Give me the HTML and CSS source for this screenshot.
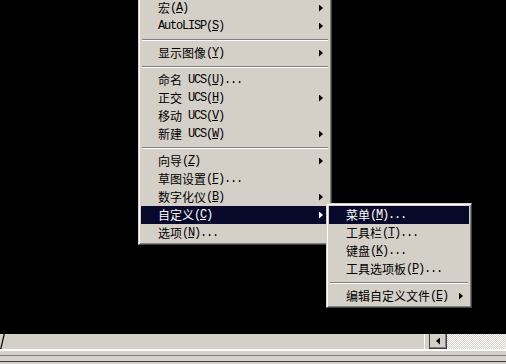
FILE: index.html
```html
<!DOCTYPE html>
<html lang="zh-CN">
<head>
    <meta charset="UTF-8">
    <title>工具菜单</title>
    <link rel="stylesheet" href="styles.css">
</head>
<body>
    <div class="drawing"></div>

    <div class="hscroll">
        <div class="track">
            <svg class="grip" width="6" height="17" viewBox="0 0 6 17"><line x1="4.5" y1="0" x2="0.5" y2="17" stroke="#000" stroke-width="1.2"/></svg>
        </div>
        <div class="thumb"></div>
        <div class="scroll-btn"><span class="left-arrow"></span></div>
        <div class="pattern"></div>
    </div>
    <div class="strip"></div>

    <ul class="menu main">
        <li class="item sub-arrow">宏<span class="en">(<u>A</u>)</span></li>
        <li class="item sub-arrow"><span class="en">AutoLISP(<u>S</u>)</span></li>
        <li class="sep"></li>
        <li class="item sub-arrow">显示图像<span class="en">(<u>Y</u>)</span></li>
        <li class="sep"></li>
        <li class="item">命名<span class="en"> UCS(<u>U</u>)...</span></li>
        <li class="item sub-arrow">正交<span class="en"> UCS(<u>H</u>)</span></li>
        <li class="item">移动<span class="en"> UCS(<u>V</u>)</span></li>
        <li class="item sub-arrow">新建<span class="en"> UCS(<u>W</u>)</span></li>
        <li class="sep"></li>
        <li class="item sub-arrow">向导<span class="en">(<u>Z</u>)</span></li>
        <li class="item">草图设置<span class="en">(<u>F</u>)...</span></li>
        <li class="item sub-arrow">数字化仪<span class="en">(<u>B</u>)</span></li>
        <li class="item sub-arrow active">自定义<span class="en">(<u>C</u>)</span></li>
        <li class="item">选项<span class="en">(<u>N</u>)...</span></li>
    </ul>

    <ul class="menu submenu">
        <li class="item active">菜单<span class="en">(<u>M</u>)...</span></li>
        <li class="item">工具栏<span class="en">(<u>T</u>)...</span></li>
        <li class="item">键盘<span class="en">(<u>K</u>)...</span></li>
        <li class="item">工具选项板<span class="en">(<u>P</u>)...</span></li>
        <li class="sep"></li>
        <li class="item sub-arrow">编辑自定义文件<span class="en">(<u>E</u>)</span></li>
    </ul>
</body>
</html>
```

FILE: styles.css
```css
body { margin: 0; width: 506px; height: 364px; overflow: hidden; background: #000; display: flex; flex-direction: column; position: relative; font-family: "Noto Sans CJK SC", sans-serif; font-size: 12px; }
.drawing { flex: 1; }

/* bottom scroll bar */
.hscroll { height: 15px; display: flex; }
.track { flex: 1; background: #d4d0c8; }
.grip { display: block; margin-top: -1px; }
.thumb { width: 6px; box-sizing: border-box; background: #d4d0c8; border-left: 1px solid #fff; border-right: 1px solid #404040; }
.scroll-btn { width: 17px; box-sizing: border-box; background: #d4d0c8; border-right: 1px solid #404040; border-bottom: 1px solid #404040; box-shadow: inset -1px -1px #808080; display: flex; align-items: center; justify-content: center; }
.left-arrow { width: 4px; height: 7px; background: #000; clip-path: polygon(100% 0, 100% 100%, 0 50%); }
.pattern { width: 59px; background-image: conic-gradient(#fff 25%, #d4d0c8 0 50%, #fff 0 75%, #d4d0c8 0); background-size: 2px 2px; }
.strip { height: 15px; background: linear-gradient(#fff 0 2px, #d4d0c8 2px 6px, #808080 6px 7px, #d4d0c8 7px 12px, #404040 12px 13px, #d4d0c8 13px); }

/* menus */
.menu { position: absolute; margin: 0; padding: 2px; list-style: none; box-sizing: border-box; background: #d4d0c8; border: 1px solid; border-color: #d4d0c8 #404040 #404040 #d4d0c8; box-shadow: inset 1px 1px #fff, inset -1px -1px #808080; }
.main { left: 138px; top: -4px; width: 194px; }
.submenu { left: 326px; top: 203px; width: 146px; }
.item { height: 18px; display: flex; align-items: center; padding: 0 6px 0 17px; color: #000; white-space: pre; line-height: 18px; }
.item .en { font-family: "Liberation Mono", monospace; font-size: 12px; letter-spacing: -1.2px; }
.item u { text-underline-offset: 1px; }
.sub-arrow::after { content: ""; margin-left: auto; width: 4px; height: 7px; background: currentColor; clip-path: polygon(0 0, 100% 50%, 0 100%); }
.item.active { background: #08082a; color: #fff; }
.sep { height: 0; margin: 4px 1px 3px; border-top: 1px solid #808080; border-bottom: 1px solid #fff; }
```
